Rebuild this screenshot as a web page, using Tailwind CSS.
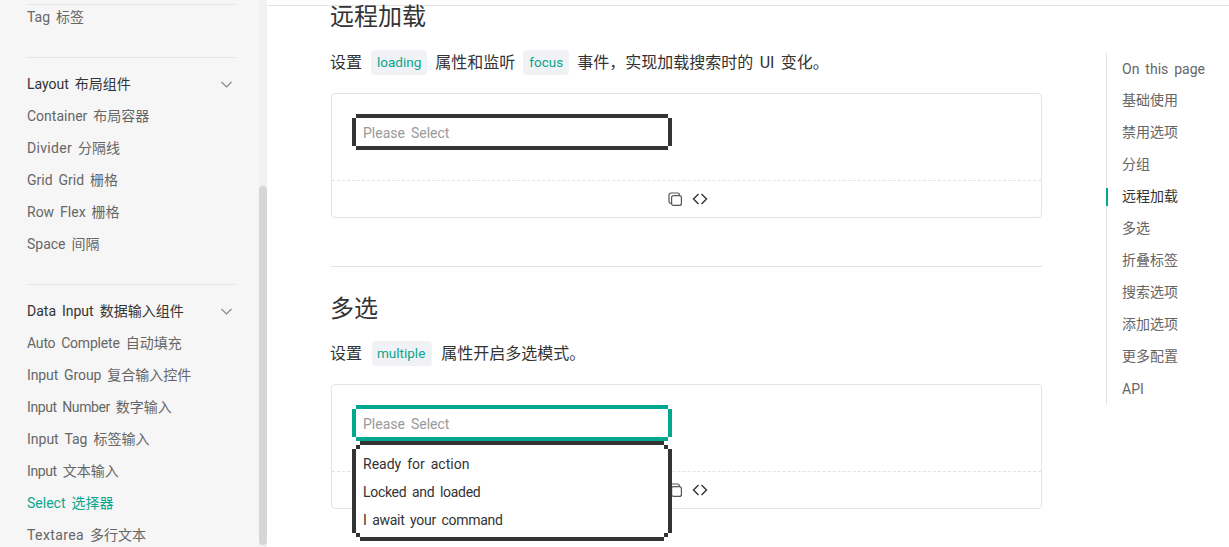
<!DOCTYPE html>
<html lang="zh-CN">
<head>
    <meta charset="UTF-8">
    <title>Select 选择器</title>
    <script src="https://cdn.jsdelivr.net/npm/@tailwindcss/browser@4"></script>
</head>
<body class="h-screen overflow-hidden bg-white text-[14px] text-[#333] [font-family:Roboto,'Noto_Sans_CJK_SC',sans-serif] [word-spacing:2.5px]">
    <div class="flex h-[547px] overflow-hidden">
        <!-- 侧边栏 -->
        <aside class="w-[259px] shrink-0 bg-[#f6f6f6] pl-[27px] pr-[24px] pt-[4px] text-[#666]">
            <div class="border-t border-[#e3e3e3] h-[24px] leading-[24px]">Tag 标签</div>
            <div class="mt-[29px] border-t border-[#e3e3e3] pt-[10px]">
                <div class="flex h-8 items-center justify-between text-[#333]">
                    <span>Layout 布局组件</span>
                    <svg class="mr-[3px]" width="11" height="11" viewBox="0 0 11 11" fill="none" stroke="#8a8a8a" stroke-width="1.2"><path d="M.5 3 5.500 8 10.500 3"/></svg>
                </div>
                <div class="h-8 leading-8">Container 布局容器</div>
                <div class="h-8 leading-8"><span class="tracking-[0.3px]">Divider</span> 分隔线</div>
                <div class="h-8 leading-8">Grid Grid 栅格</div>
                <div class="h-8 leading-8">Row Flex 栅格</div>
                <div class="h-8 leading-8">Space 间隔</div>
            </div>
            <div class="mt-6 border-t border-[#e3e3e3] pt-[10px]">
                <div class="flex h-8 items-center justify-between text-[#333]">
                    <span>Data Input 数据输入组件</span>
                    <svg class="mr-[3px]" width="11" height="11" viewBox="0 0 11 11" fill="none" stroke="#8a8a8a" stroke-width="1.2"><path d="M.5 3 5.500 8 10.500 3"/></svg>
                </div>
                <div class="h-8 leading-8"><span class="tracking-[-0.2px]">Auto Complete</span> 自动填充</div>
                <div class="h-8 leading-8"><span class="tracking-[-0.1px]">Input Group</span> 复合输入控件</div>
                <div class="h-8 leading-8"><span class="tracking-[-0.4px]">Input Number</span> 数字输入</div>
                <div class="h-8 leading-8">Input Tag 标签输入</div>
                <div class="h-8 leading-8"><span class="tracking-[-0.4px]">Input</span> 文本输入</div>
                <div class="h-8 leading-8 text-[#0aa58f]">Select 选择器</div>
                <div class="h-8 leading-8"><span class="tracking-[0.4px]">Textarea</span> 多行文本</div>
            </div>
        </aside>

        <!-- 滚动条 -->
        <div class="w-[8px] shrink-0 bg-[#f1f1f1] pt-[186px]">
            <div class="h-[359px] rounded-[4px] bg-[#d6d6d6]"></div>
        </div>

        <div class="flex-1 min-w-0">
            <div class="h-[6px] border-b border-[#e3e3e3]"></div>
            <div class="flex pl-[64px]">
                <!-- 内容 -->
                <main class="w-[711px] shrink-0">
                    <h2 class="-ml-px h-[22px] text-[24px] leading-[22px] text-[#333]">远程加载</h2>
                    <p class="-ml-px mt-[22px] flex h-[25px] items-center text-[16px]">
                        <span>设置</span>
                        <code class="ml-[9px] mr-[8px] h-[25px] rounded-[4px] bg-[#f0f2f5] px-[6px] text-[13.5px] leading-[25px] text-[#0aa58f] [font-family:inherit]">loading</code>
                        <span>属性和监听</span>
                        <code class="mx-[8px] h-[25px] rounded-[4px] bg-[#f0f2f5] px-[6px] text-[13.5px] leading-[25px] text-[#0aa58f] [font-family:inherit]">focus</code>
                        <span>事件，实现加载搜索时的 UI 变化。</span>
                    </p>

                    <div class="mt-[18px] h-[125px] rounded-[4px] border border-[#e3e3e3]">
                        <div class="h-[87px] border-b border-dashed border-[#e3e3e3] px-[20px] pt-[20px]">
                            <div class="relative w-[320px]">
                                <div class="mx-[4px] border-y-4 border-[#333]">
                                    <div class="h-[28px] bg-white pl-[7px] pt-px leading-[28px] text-[#999] shadow-[-4px_0_0_#333,4px_0_0_#333]">Please Select</div>
                                </div>
                            </div>
                        </div>
                        <div class="flex h-[36px] items-center justify-center gap-[10px] pl-[2px]">
                            <svg width="14" height="14" viewBox="0 0 14 14" fill="none" stroke="#555" stroke-width="1.2"><rect x="3.6" y="3.6" width="9.8" height="9.8" rx="2"/><path d="M3.6 11.4h-.6a2 2 0 0 1-2-2V3a2 2 0 0 1 2-2h6.400a2 2 0 0 1 2 2v.6"/></svg>
                            <svg width="16" height="12" viewBox="0 0 16 12" fill="none" stroke="#333" stroke-width="1.4"><path d="M6.500 1 1.500 6 6.500 11M9.500 1 14.500 6 9.500 11"/></svg>
                        </div>
                    </div>

                    <hr class="mt-[48px] border-t border-[#e3e3e3]">

                    <h2 class="-ml-px mt-[24px] h-[35px] text-[24px] leading-[36px] text-[#333]">多选</h2>
                    <p class="-ml-px mt-[15px] flex h-[25px] items-center text-[16px]">
                        <span>设置</span>
                        <code class="ml-[10px] mr-[9px] h-[25px] rounded-[4px] bg-[#f0f2f5] pl-[5px] pr-[7px] text-[13.5px] leading-[25px] text-[#0aa58f] [font-family:inherit]">multiple</code>
                        <span>属性开启多选模式。</span>
                    </p>

                    <div class="mt-[18px] h-[125px] rounded-[4px] border border-[#e3e3e3]">
                        <div class="h-[87px] border-b border-dashed border-[#e3e3e3] px-[20px] pt-[20px]">
                            <div class="relative z-10 w-[320px]">
                                <div class="mx-[4px] border-y-4 border-[#00a88f]">
                                    <div class="h-[28px] bg-white pl-[7px] pt-px leading-[28px] text-[#999] shadow-[-4px_0_0_#00a88f,4px_0_0_#00a88f]">Please Select</div>
                                </div>
                                <!-- 下拉菜单 -->
                                <div class="absolute left-0 top-full w-[320px] text-[#333]">
                                    <div class="mx-[8px] h-[4px] bg-[#333]"></div>
                                    <div class="mx-[4px] h-[4px] border-x-4 border-[#333] bg-white"></div>
                                    <div class="h-[84px] border-x-4 border-[#333] bg-white pl-[7px] pt-px">
                                        <div class="h-[28px] leading-[28px]">Ready for action</div>
                                        <div class="h-[28px] leading-[28px] tracking-[-0.3px]">Locked and loaded</div>
                                        <div class="h-[28px] leading-[28px] tracking-[-0.3px]">I await your command</div>
                                    </div>
                                    <div class="mx-[4px] h-[4px] border-x-4 border-[#333] bg-white"></div>
                                    <div class="mx-[8px] h-[4px] bg-[#333]"></div>
                                </div>
                            </div>
                        </div>
                        <div class="flex h-[36px] items-center justify-center gap-[10px] pb-px pl-[2px]">
                            <svg width="14" height="14" viewBox="0 0 14 14" fill="none" stroke="#555" stroke-width="1.2"><rect x="3.6" y="3.6" width="9.8" height="9.8" rx="2"/><path d="M3.6 11.4h-.6a2 2 0 0 1-2-2V3a2 2 0 0 1 2-2h6.400a2 2 0 0 1 2 2v.6"/></svg>
                            <svg width="16" height="12" viewBox="0 0 16 12" fill="none" stroke="#333" stroke-width="1.4"><path d="M6.500 1 1.500 6 6.500 11M9.500 1 14.500 6 9.500 11"/></svg>
                        </div>
                    </div>
                </main>

                <!-- 页内导航 -->
                <nav class="relative ml-[64px] mt-[47px] h-[352px] w-[123px] border-l border-[#e3e3e3] pl-[15px] text-[#666]">
                    <div class="absolute left-[-1px] top-[135px] h-[18px] w-[2px] bg-[#00a88f]"></div>
                    <div class="h-8 leading-8">On this page</div>
                    <div class="h-8 leading-[31px]">基础使用</div>
                    <div class="h-8 leading-[31px]">禁用选项</div>
                    <div class="h-8 leading-[31px]">分组</div>
                    <div class="h-8 leading-[31px] text-[#333]">远程加载</div>
                    <div class="h-8 leading-[31px]">多选</div>
                    <div class="h-8 leading-[31px]">折叠标签</div>
                    <div class="h-8 leading-[31px]">搜索选项</div>
                    <div class="h-8 leading-[31px]">添加选项</div>
                    <div class="h-8 leading-[31px]">更多配置</div>
                    <div class="h-8 leading-8">API</div>
                </nav>
            </div>
        </div>
    </div>
</body>
</html>
